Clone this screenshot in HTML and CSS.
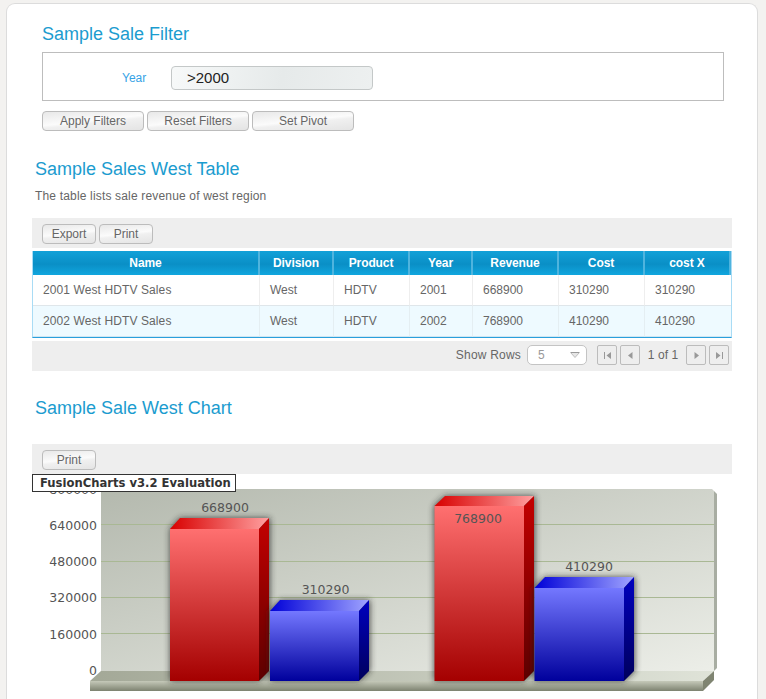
FILE: index.html
```html
<!DOCTYPE html>
<html lang="en">
<head>
    <meta charset="UTF-8">
    <meta name="viewport" content="width=device-width, initial-scale=1.0">
    <title>Sample Sales Dashboard</title>
    <link rel="stylesheet" href="styles.css">
</head>
<body>
    <div class="panel">
        <section class="filter">
            <h2 class="filter-title">Sample Sale Filter</h2>
            <div class="filter-box">
                <label class="filter-label">Year</label>
                <div class="filter-input">&gt;2000</div>
            </div>
            <div class="filter-actions">
                <button class="button button-wide">Apply Filters</button>
                <button class="button button-wide">Reset Filters</button>
                <button class="button button-wide">Set Pivot</button>
            </div>
        </section>

        <section class="report">
            <h2 class="report-title">Sample Sales West Table</h2>
            <p class="report-desc">The table lists sale revenue of west region</p>
            <div class="toolbar">
                <button class="button">Export</button>
                <button class="button">Print</button>
            </div>
            <table class="grid">
                <colgroup>
                    <col class="col-name">
                    <col class="col-division">
                    <col class="col-product">
                    <col class="col-year">
                    <col class="col-money">
                    <col class="col-money">
                    <col class="col-money">
                </colgroup>
                <thead>
                    <tr>
                        <th>Name</th>
                        <th>Division</th>
                        <th>Product</th>
                        <th>Year</th>
                        <th>Revenue</th>
                        <th>Cost</th>
                        <th>cost X</th>
                    </tr>
                </thead>
                <tbody>
                    <tr>
                        <td>2001 West HDTV Sales</td>
                        <td>West</td>
                        <td>HDTV</td>
                        <td>2001</td>
                        <td>668900</td>
                        <td>310290</td>
                        <td>310290</td>
                    </tr>
                    <tr class="row-alt">
                        <td>2002 West HDTV Sales</td>
                        <td>West</td>
                        <td>HDTV</td>
                        <td>2002</td>
                        <td>768900</td>
                        <td>410290</td>
                        <td>410290</td>
                    </tr>
                </tbody>
            </table>
            <div class="pager">
                <span class="pager-label">Show Rows</span>
                <div class="pager-select">
                    <span>5</span>
                    <svg width="10" height="6" viewBox="0 0 10 6"><path d="M0.5 0.5H9.500L5 5.500Z" fill="#e6e6e6" stroke="#bdbdbd"/><path d="M1 0.5H9" stroke="#999"/></svg>
                </div>
                <div class="pager-group">
                    <button class="page-btn"><svg width="9" height="9" viewBox="0 0 9 9"><path d="M1 1H2V8H1ZM8 1V8L3.500 4.500Z" fill="#999"/></svg></button>
                    <button class="page-btn"><svg width="9" height="9" viewBox="0 0 9 9"><path d="M6.500 1V8L2 4.500Z" fill="#999"/></svg></button>
                </div>
                <span class="pager-count">1 of 1</span>
                <div class="pager-group">
                    <button class="page-btn"><svg width="9" height="9" viewBox="0 0 9 9"><path d="M2.500 1V8L7 4.500Z" fill="#999"/></svg></button>
                    <button class="page-btn"><svg width="9" height="9" viewBox="0 0 9 9"><path d="M1 1V8L5.500 4.500ZM7 1H8V8H7Z" fill="#999"/></svg></button>
                </div>
            </div>
        </section>

        <section class="report report-chart">
            <h2 class="report-title">Sample Sale West Chart</h2>
            <div class="toolbar toolbar-chart">
                <button class="button">Print</button>
            </div>
            <div class="chart">
                <div class="chart-badge">FusionCharts v3.2 Evaluation</div>
                <svg class="chart-svg" width="700" height="225" viewBox="32 474 700 225">
                    <defs>
                        <linearGradient id="plotBg" x1="0" y1="0" x2="1" y2="1">
                            <stop offset="0" stop-color="#b4b9ae"/>
                            <stop offset="1" stop-color="#eceee8"/>
                        </linearGradient>
                        <linearGradient id="floorTop" x1="0" y1="0" x2="1" y2="0">
                            <stop offset="0" stop-color="#a3a897"/>
                            <stop offset="1" stop-color="#dfe3d8"/>
                        </linearGradient>
                        <linearGradient id="floorFront" x1="0" y1="0" x2="0" y2="1">
                            <stop offset="0" stop-color="#c5c9b9"/>
                            <stop offset="1" stop-color="#7d8270"/>
                        </linearGradient>
                        <linearGradient id="redFront" x1="0" y1="0" x2="0" y2="1">
                            <stop offset="0" stop-color="#ff7070"/>
                            <stop offset="1" stop-color="#a40000"/>
                        </linearGradient>
                        <linearGradient id="redTop" x1="0" y1="0" x2="1" y2="0">
                            <stop offset="0" stop-color="#d80000"/>
                            <stop offset="1" stop-color="#ffa0a0"/>
                        </linearGradient>
                        <linearGradient id="redSide" x1="0" y1="0" x2="0" y2="1">
                            <stop offset="0" stop-color="#c40000"/>
                            <stop offset="1" stop-color="#5c0000"/>
                        </linearGradient>
                        <linearGradient id="blueFront" x1="0" y1="0" x2="0" y2="1">
                            <stop offset="0" stop-color="#7478ff"/>
                            <stop offset="1" stop-color="#00009c"/>
                        </linearGradient>
                        <linearGradient id="blueTop" x1="0" y1="0" x2="1" y2="0">
                            <stop offset="0" stop-color="#0000d8"/>
                            <stop offset="1" stop-color="#a0a4ff"/>
                        </linearGradient>
                        <linearGradient id="blueSide" x1="0" y1="0" x2="0" y2="1">
                            <stop offset="0" stop-color="#0000c0"/>
                            <stop offset="1" stop-color="#00005c"/>
                        </linearGradient>
                        <filter id="barShadow" x="-20%" y="-20%" width="140%" height="140%">
                            <feGaussianBlur stdDeviation="3"/>
                        </filter>
                    </defs>

                    <!-- plot area -->
                    <path d="M714 491L717 494V668L714 671Z" fill="#a8ada2"/>
                    <path d="M101 489H712L714 491V671H101Z" fill="url(#plotBg)"/>
                    <g class="gridlines">
                        <path d="M101 524.500H714M101 561.500H714M101 597.500H714M101 633.500H714"/>
                    </g>

                    <!-- floor -->
                    <path d="M101 671H714L703 681H90Z" fill="url(#floorTop)"/>
                    <rect x="90" y="681" width="613" height="10" fill="url(#floorFront)"/>
                    <path d="M703 681L714 671V680L703 691Z" fill="#7f8471"/>

                    <!-- y axis -->
                    <g class="axis-labels">
                        <text x="97" y="494">800000</text>
                        <text x="97" y="530">640000</text>
                        <text x="97" y="566">480000</text>
                        <text x="97" y="602">320000</text>
                        <text x="97" y="639">160000</text>
                        <text x="97" y="675">0</text>
                    </g>

                    <!-- 2001 -->
                    <path d="M180 518H270V671L259 681H170V529Z" fill="#222" opacity="0.75" filter="url(#barShadow)"/>
                    <rect x="170" y="529" width="89" height="152" fill="url(#redFront)"/>
                    <path d="M170 529L180 518H269L259 529Z" fill="url(#redTop)"/>
                    <path d="M259 529L269 518V671L259 681Z" fill="url(#redSide)"/>
                    <path d="M280 600H370V671L359 681H270V611Z" fill="#222" opacity="0.75" filter="url(#barShadow)"/>
                    <rect x="270" y="611" width="89" height="70" fill="url(#blueFront)"/>
                    <path d="M270 611L280 600H369L359 611Z" fill="url(#blueTop)"/>
                    <path d="M359 611L369 600V671L359 681Z" fill="url(#blueSide)"/>

                    <!-- 2002 -->
                    <path d="M445 496H535V671L524 681H434V506Z" fill="#222" opacity="0.75" filter="url(#barShadow)"/>
                    <rect x="434.500" y="506" width="89.500" height="175" fill="url(#redFront)"/>
                    <path d="M434.500 506L445 496H534L524 506Z" fill="url(#redTop)"/>
                    <path d="M524 506L534 496V671L524 681Z" fill="url(#redSide)"/>
                    <path d="M545 577H635V671L624 681H534V588Z" fill="#222" opacity="0.75" filter="url(#barShadow)"/>
                    <rect x="534.500" y="588" width="89.500" height="93" fill="url(#blueFront)"/>
                    <path d="M534.500 588L545 577H634L624 588Z" fill="url(#blueTop)"/>
                    <path d="M624 588L634 577V671L624 681Z" fill="url(#blueSide)"/>

                    <g class="value-labels">
                        <text x="225" y="512">668900</text>
                        <text x="325.500" y="594">310290</text>
                        <text x="478" y="523">768900</text>
                        <text x="589" y="571">410290</text>
                    </g>
                </svg>
            </div>
        </section>
    </div>
</body>
</html>
```

FILE: styles.css
```css
html, body {
    height: 699px;
    overflow: hidden;
}
body {
    margin: 0;
    background-color: #f3f2f0;
    font-family: "Liberation Sans", Arial, sans-serif;
    font-size: 12px;
    color: #666;
}
.panel {
    box-sizing: border-box;
    width: 752px;
    height: 696px;
    margin: 3px 0 0 6px;
    padding-left: 26px;
    background-color: #fff;
    border: 1px solid #dcdcdc;
    border-bottom: none;
    border-radius: 9px 9px 0 0;
    overflow: hidden;
}
h2 {
    margin: 0;
    font-size: 18px;
    font-weight: normal;
    line-height: 22px;
    color: #1b9ccf;
}

/* filter */
.filter {
    padding: 19px 0 0 9px;
}
.filter-box {
    box-sizing: border-box;
    display: flex;
    align-items: center;
    width: 682px;
    height: 49px;
    margin-top: 7px;
    padding: 2px 0 0 79px;
    border: 1px solid #bdbdbd;
}
.filter-label {
    width: 49px;
    color: #36a3e6;
}
.filter-input {
    box-sizing: border-box;
    width: 202px;
    height: 24px;
    padding-left: 15px;
    border: 1px solid #c4c8c8;
    border-radius: 4px;
    background: linear-gradient(100deg, #f7f9f9, #e6eaea 55%, #edf0f0 100%);
    font-size: 15px;
    line-height: 22px;
    color: #222;
}
.filter-actions {
    display: flex;
    gap: 3px;
    margin-top: 10px;
}

/* buttons */
.button {
    box-sizing: border-box;
    width: 54px;
    height: 20px;
    padding: 0;
    border: 1px solid #bcbcbc;
    border-radius: 4px;
    background: linear-gradient(174deg, #e8e8e8 0, #fbfbfb 48%, #f0f0f0 58%, #e4e4e4 100%);
    font-family: inherit;
    font-size: 12px;
    color: #666;
    cursor: pointer;
}
.button-wide {
    width: 102px;
}

/* report sections */
.report-title {
    margin-top: 27px;
    margin-left: 2px;
}
.report-desc {
    margin: 9px 0 0 2px;
    line-height: 14px;
    letter-spacing: 0.17px;
    color: #666;
}
.toolbar {
    display: flex;
    gap: 3px;
    box-sizing: border-box;
    height: 30px;
    width: 700px;
    margin-left: -1px;
    margin-top: 15px;
    padding: 6px 0 0 10px;
    background-color: #eee;
}
.report-chart .report-title {
    margin-top: 26px;
}
.toolbar-chart {
    margin-top: 25px;
}

/* table */
.grid {
    box-sizing: border-box;
    width: 700px;
    margin: 3px 0 0 -1px;
    border-collapse: separate;
    border-spacing: 0;
    table-layout: fixed;
    border-left: 1px solid #a9dcf5;
    border-right: 1px solid #a9dcf5;
    border-bottom: 1px solid #2a9fdc;
}
.col-name { width: 227px; }
.col-division { width: 74px; }
.col-product { width: 76px; }
.col-year { width: 63px; }
.col-money { width: 86px; }
.grid th {
    height: 24px;
    padding: 0;
    border-right: 2px solid #4fb4de;
    background: linear-gradient(#12a1d8, #0a8fc6 55%, #10a6de);
    font-size: 12px;
    letter-spacing: -0.1px;
    color: #fff;
}
.grid td {
    height: 30px;
    padding: 0 0 0 10px;
    border-right: 1px solid #eeeeee;
    border-bottom: 1px solid #dfe6ea;
    background-color: #fff;
    color: #666;
}
.grid td:first-child {
    letter-spacing: 0.1px;
}
.grid td:last-child {
    border-right: none;
}
.grid .row-alt td {
    background-color: #eefaff;
    border-bottom-color: #cfe6f2;
    border-right-color: #e4eef2;
}

/* pager */
.pager {
    display: flex;
    align-items: center;
    justify-content: flex-end;
    box-sizing: border-box;
    width: 700px;
    height: 30px;
    margin: 3px 0 0 -1px;
    padding: 0 3px 2px 0;
    background-color: #eee;
}
.pager-label {
    margin-right: 6px;
    letter-spacing: 0.2px;
}
.pager-select {
    display: flex;
    align-items: center;
    justify-content: space-between;
    box-sizing: border-box;
    width: 60px;
    height: 20px;
    margin-right: 10px;
    padding: 0 6px 0 10px;
    border: 1px solid #c4c4c4;
    border-radius: 5px;
    background-color: #fff;
    color: #999;
}
.pager-group {
    display: flex;
    gap: 3px;
}
.pager-count {
    width: 46px;
    text-align: center;
    letter-spacing: 0.1px;
}
.page-btn {
    display: flex;
    align-items: center;
    justify-content: center;
    box-sizing: border-box;
    width: 20px;
    height: 20px;
    padding: 0;
    border: 1px solid #bcbcbc;
    border-radius: 2px;
    background-color: #eee;
}

/* chart */
.chart {
    position: relative;
    width: 700px;
    margin-left: -1px;
}
.chart-svg {
    display: block;
}
.chart-badge {
    position: absolute;
    top: 0;
    left: 0;
    box-sizing: border-box;
    width: 204px;
    height: 18px;
    padding-left: 7px;
    border: 1px solid #333;
    background-color: #fff;
    font-family: "DejaVu Sans", Verdana, sans-serif;
    font-size: 11.600px;
    font-weight: bold;
    line-height: 17px;
    color: #333;
}
.gridlines path {
    fill: none;
    stroke: #a9b894;
    stroke-width: 1;
}
.axis-labels text,
.value-labels text {
    font-family: "DejaVu Sans", Verdana, sans-serif;
    font-size: 12.500px;
    fill: #555;
}
.axis-labels text {
    text-anchor: end;
}
.value-labels text {
    text-anchor: middle;
}
```
